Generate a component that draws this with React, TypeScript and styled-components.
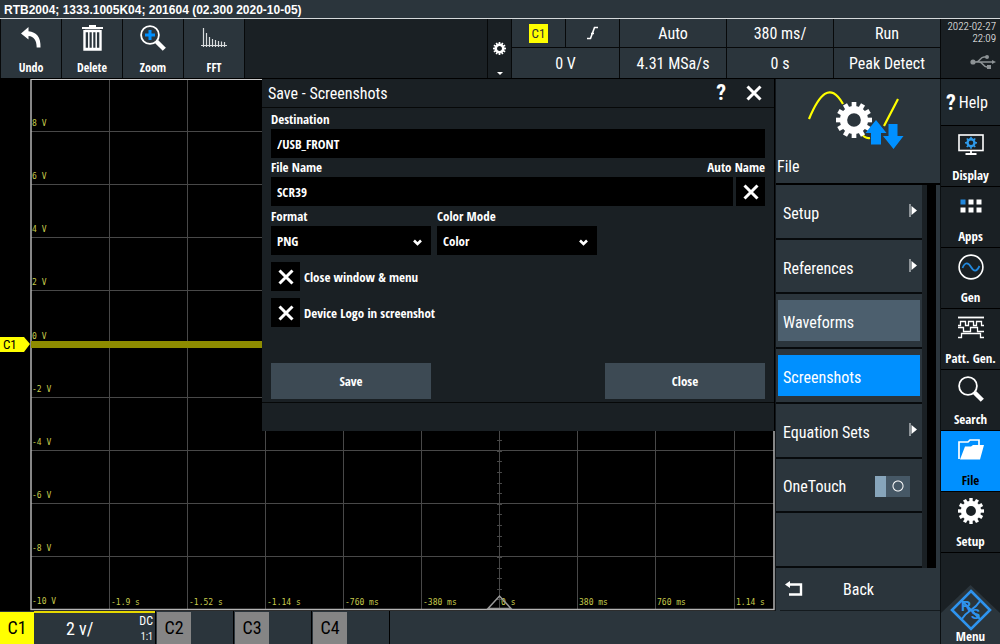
import React from "react";
import styled, { createGlobalStyle } from "styled-components";

const narrow = `"Roboto Condensed", "Arial Narrow", sans-serif`;
const narrowBold = `"Open Sans Condensed", "Roboto Condensed", sans-serif`;
const c = {
  panel: "#2b353c",
  dark: "#1a2024",
  blue: "#0090ff",
  slate: "#3d4a54",
  steel: "#4c5f6e",
  yellow: "#ffff00",
};

const GlobalStyle = createGlobalStyle`
  * { box-sizing: border-box; }
  body { margin: 0; background: ${c.panel}; }
  button, input, select { font: inherit; color: inherit; border: 0; padding: 0; margin: 0; border-radius: 0; }
  button { background: none; cursor: pointer; }
`;

const Page = styled.div`
  display: flex;
  flex-direction: column;
  min-height: 100vh;
  background: ${c.panel};
  color: #fff;
  font-family: ${narrow};
  font-size: 14px;
`;
const TitleBar = styled.header`
  height: 19px;
  padding: 2px 4px 0;
  border-bottom: 1px solid #d5d9db;
  font: bold 12px/17px "Liberation Sans", sans-serif;
`;
const TopBar = styled.div`
  display: flex;
  height: 60px;
  padding-left: 1px;
  gap: 1px;
  background: #07090a;
  border-bottom: 1px solid #000;
`;
const Tool = styled.button`
  width: 60px;
  display: flex;
  flex-direction: column;
  align-items: center;
  justify-content: space-between;
  padding: 6px 0 2px;
  background: ${c.panel};
  font-family: ${narrowBold};
  font-weight: bold;
  font-size: 12px;
  line-height: 16px;
`;
const Filler = styled.div`
  flex: 1;
  background: ${c.dark};
`;
const Options = styled.button`
  width: 23px;
  display: flex;
  flex-direction: column;
  align-items: center;
  padding-top: 23px;
  gap: 17px;
  background: ${c.dark};
`;
const Readouts = styled.div`
  display: grid;
  grid-template-columns: 53px 53px repeat(3, 106px);
  grid-template-rows: 28px 1fr;
  gap: 1px;
`;
const Readout = styled.button<{ $span?: boolean }>`
  display: flex;
  align-items: center;
  justify-content: center;
  grid-column: ${(p) => (p.$span ? "span 2" : "auto")};
  background: ${c.panel};
  font-size: 16px;
`;
const Badge = styled.span`
  padding: 0 3px;
  background: ${c.yellow};
  color: #333;
  font-size: 13px;
  line-height: 19px;
`;
const Clock = styled.div`
  width: 59px;
  display: flex;
  flex-direction: column;
  align-items: flex-end;
  padding: 2px 4px 0 0;
  background: ${c.dark};
  color: #fff;
  font-family: "Roboto Condensed Light", ${narrow};
  font-size: 11px;
  line-height: 12px;
  white-space: nowrap;
  svg { margin-top: 9px; }
`;
const Body = styled.div`
  flex: 1;
  display: flex;
`;
const Work = styled.div`
  flex: 1;
  display: flex;
  flex-direction: column;
`;
const Upper = styled.main`
  flex: 1;
  display: flex;
`;
const Scope = styled.section`
  position: relative;
  flex: 1;
  background: #000;
  svg.plot { display: block; width: 100%; }
`;
const Dialog = styled.form`
  position: absolute;
  top: 0;
  right: 0;
  left: 262px;
  background: ${c.dark};
  border-right: 1px solid #000;
  font-family: ${narrowBold};
  font-weight: bold;
  font-size: 13px;
`;
const DialogHead = styled.div`
  display: flex;
  align-items: center;
  height: 29px;
  padding: 0 12px 0 6px;
  gap: 20px;
  border-bottom: 1px solid #060808;
  font-family: ${narrow};
  h2 { flex: 1; margin: 0; padding-top: 1px; font-size: 16px; font-weight: normal; }
  button { display: flex; font-size: 22px; line-height: 24px; }
`;
const DialogBody = styled.div`
  padding: 2px 9px 3px;
  border-bottom: 1px solid #060808;
`;
const LabelRow = styled.div`
  display: flex;
  justify-content: space-between;
  line-height: 19px;
`;
const FieldRow = styled.div`
  display: flex;
  gap: 3px;
`;
const TextBox = styled.input`
  flex: 1;
  width: 100%;
  height: 29px;
  padding: 0 6px;
  background: #000;
`;
const Choices = styled.div`
  display: flex;
  gap: 6px;
`;
const Choice = styled.label`
  display: grid;
  width: 160px;
  line-height: 20px;
  svg { grid-area: 2 / 1; place-self: center end; margin: 3px 9px 0 0; pointer-events: none; }
`;
const Select = styled.select`
  grid-area: 2 / 1;
  appearance: none;
  height: 29px;
  padding: 0 6px;
  background: #000;
`;
const CheckRow = styled.label`
  display: flex;
  align-items: center;
  gap: 4px;
  margin-top: 7px;
`;
const CheckCell = styled.span`
  display: grid;
  width: 29px;
  height: 29px;
  background: #000;
  svg { grid-area: 1 / 1; place-self: center; visibility: hidden; pointer-events: none; }
  input:checked + svg { visibility: visible; }
`;
const CheckInput = styled.input`
  grid-area: 1 / 1;
  appearance: none;
`;
const Actions = styled.div`
  display: flex;
  justify-content: space-between;
  margin-top: 36px;
`;
const Action = styled.button`
  width: 160px;
  height: 36px;
  background: ${c.slate};
`;
const DialogFoot = styled.div`
  height: 28px;
`;
const Panel = styled.aside`
  width: 165px;
  display: flex;
  flex-direction: column;
  border-left: 1px solid #11161a;
`;
const PanelHead = styled.div`
  display: flex;
  flex-direction: column;
  height: 106px;
  padding: 9px 1px 0;
  border-bottom: 2px solid #000;
  svg { align-self: center; margin-right: 6px; }
  h1 { margin: 6px 0 0; font-size: 16px; font-weight: normal; line-height: 22px; }
`;
const MenuList = styled.div`
  flex: 1;
  display: flex;
  flex-direction: column;
  margin-right: 4px;
  padding-right: 10px;
  background: linear-gradient(to left, #000 9px, ${c.dark} 9px);
`;
const Item = styled.div<{ $tone?: string }>`
  flex: 1;
  display: flex;
  margin-right: 4px;
  padding: 6px 2px;
  background: ${c.panel};
  border-bottom: 2px solid #070a0c;
  font-size: 16px;
  > * {
    flex: 1;
    display: flex;
    align-items: center;
    justify-content: space-between;
    padding: 4px 3px 0 5px;
    background: ${(p) => p.$tone ?? "transparent"};
  }
  svg { margin-top: -6px; }
`;
const Toggle = styled.input`
  appearance: none;
  width: 35px;
  height: 21px;
  margin-right: 7px;
  background: radial-gradient(circle at 23px 10px, transparent 4px, #fff 5px, transparent 6px),
    linear-gradient(to right, #87a5bb 11px, #465866 11px);
`;
const Back = styled.button`
  display: flex;
  align-items: center;
  height: 43px;
  padding-left: 5px;
  margin-left: 4px;
  border-bottom: 1px solid #141a1e;
  background: ${c.panel};
  font-size: 16px;
  span { flex: 1; padding-right: 26px; }
`;
const Channels = styled.footer`
  display: flex;
  gap: 1px;
  height: 33px;
  font-size: 18px;
`;
const Channel = styled.button<{ $on?: boolean }>`
  display: flex;
  align-items: center;
  width: ${(p) => (p.$on ? 156 : 77)}px;
  border-right: 1px solid #000;
  text-align: left;
  > b {
    width: 34px;
    line-height: 32px;
    font-weight: normal;
    text-align: center;
    align-self: flex-end;
    background: ${(p) => (p.$on ? c.yellow : "#858585")};
    color: #000;
  }
`;
const Scale = styled.span`
  flex: 1;
  align-self: stretch;
  display: flex;
  align-items: center;
  border-top: 2px solid #e6d800;
  padding-right: 2px;
  white-space: nowrap;
  > span:first-child { flex: 1; padding-left: 32px; }
`;
const Coupling = styled.span`
  display: flex;
  flex-direction: column;
  align-items: flex-end;
  font-size: 12px;
  line-height: 16px;
  small { font-size: 10px; }
`;
const Sidebar = styled.nav`
  width: 60px;
  display: flex;
  flex-direction: column;
  border-left: 1px solid #0b0f11;
  background: ${c.dark};
`;
const Help = styled.button`
  display: flex;
  align-items: center;
  gap: 3px;
  height: 47px;
  padding-left: 5px;
  border-bottom: 1px solid #000;
  background: #1f282e;
  font-size: 16px;
  b { font-size: 22px; }
`;
const SideItem = styled.button<{ $active?: boolean }>`
  display: flex;
  flex-direction: column;
  align-items: center;
  justify-content: space-between;
  height: 61px;
  padding: 6px 0 3px;
  border-bottom: 1px solid #000;
  background: ${(p) => (p.$active ? c.blue : "transparent")};
  color: ${(p) => (p.$active ? "#000" : "#fff")};
  font-family: ${narrowBold};
  font-weight: bold;
  font-size: 13px;
  line-height: 16px;
  white-space: nowrap;
`;
const MenuButton = styled.button`
  display: flex;
  flex-direction: column;
  align-items: center;
  margin-top: auto;
  padding-top: 4px;
  background: ${c.panel};
  clip-path: polygon(50% 0, 100% 28px, 100% 100%, 0 100%, 0 28px);
  font-family: ${narrowBold};
  font-weight: bold;
  font-size: 13px;
  line-height: 16px;
  svg { margin-bottom: -3px; }
`;

const Cross = ({ size = 16 }: { size?: number }) => (
  <svg width={size} height={size} viewBox="0 0 16 16" stroke="#fff" strokeWidth="3">
    <path d="M1.5 1.5 14.5 14.5M14.5 1.5 1.5 14.5" />
  </svg>
);

const Chevron = () => (
  <svg width="9" height="7" viewBox="0 0 9 7" fill="none" stroke="#fff" strokeWidth="2.6">
    <path d="M1 1.5 4.5 5 8 1.5" />
  </svg>
);

const Teeth = ({ cx, cy, r, count = 12, color = "#fff" }: { cx: number; cy: number; r: number; count?: number; color?: string }) => (
  <g transform={`translate(${cx} ${cy})`}>
    <circle r={r * 0.58} fill="none" stroke={color} strokeWidth={r * 0.4} />
    {Array.from({ length: count }, (_, i) => (
      <rect key={i} x={-r * 0.13} y={-r} width={r * 0.26} height={r * 0.35} fill={color} transform={`rotate(${(i * 360) / count})`} />
    ))}
  </g>
);

const Gear = ({ size }: { size: number }) => (
  <svg width={size} height={size} viewBox="0 0 26 26">
    <Teeth cx={13} cy={13} r={13} />
  </svg>
);

const UndoIcon = () => (
  <svg width="22" height="24" viewBox="0 0 22 24">
    <path d="M1 7.500 8.500 1v4.200c8 .8 12.500 6 12 16.300h-3.800C16.500 14 14 10.500 8.500 10v3.500z" fill="#fff" transform="translate(0 1)" />
  </svg>
);
const TrashIcon = () => (
  <svg width="21" height="26" viewBox="0 0 21 26" fill="none" stroke="#fff">
    <path d="M0 3h21M7 1.200h7" strokeWidth="2.200" />
    <path d="M2.500 5v19.500h16V5M3 6h15M3 24h15" strokeWidth="2.400" />
    <path d="M6.800 6v18M10.500 6v18M14.200 6v18" strokeWidth="1.500" />
  </svg>
);
const Lens = ({ plus = false }: { plus?: boolean }) => (
  <svg width="26" height="26" viewBox="0 0 26 26" fill="none" stroke="#fff">
    <circle cx="10" cy="10" r="8.900" strokeWidth="1.800" />
    <path d="m16.500 16.500 7.800 7.800" strokeWidth="4.400" />
    {plus && <path d="M10 5v10M5 10h10" stroke={c.blue} strokeWidth="3" />}
  </svg>
);
const FftIcon = () => (
  <svg width="26" height="26" viewBox="0 0 26 26" stroke="#d9dcdd" strokeWidth="1.200">
    <path d="M0 20.500h26M2.500 3v19M5.500 8v14M8.500 12v10M11.500 14v8M14.500 15v7M17.500 16v6M20.500 16.500v5.500M23.500 17v5" />
  </svg>
);
const UsbIcon = () => (
  <svg width="26" height="16" viewBox="0 0 26 16" fill="none" stroke="#8d9295" strokeWidth="1.500">
    <path d="M3 8h20M6 8c4 0 4-5 8-5h3M9 8c4 0 4 5 8 5h2" />
    <circle cx="3" cy="8" r="2.600" fill="#8d9295" stroke="none" />
    <circle cx="17" cy="3" r="2" fill="#8d9295" stroke="none" />
    <path d="M17 11h4v4h-4zM22 6l4 2-4 2z" fill="#8d9295" stroke="none" />
  </svg>
);
const DisplayIcon = () => (
  <svg width="26" height="26" viewBox="0 0 26 26" fill="none" stroke="#fff">
    <rect x="1" y="3" width="24" height="15.500" strokeWidth="1.600" />
    <path d="M13 19v3M7.500 22h11" strokeWidth="1.800" />
    <g stroke="none"><Teeth cx={13} cy={10.8} r={6} count={8} color="#2f9bea" /></g>
  </svg>
);
const AppsIcon = () => (
  <svg width="26" height="26" viewBox="0 0 26 26" fill="#fff">
    <path d="M2.500 6.500h5v5h-5z" fill="#2288dd" />
    <path d="M10.500 6.500h5v5h-5zM18.500 6.500h5v5h-5zM2.500 14.500h5v5h-5zM10.500 14.500h5v5h-5zM18.500 14.500h5v5h-5z" />
  </svg>
);
const GenIcon = () => (
  <svg width="26" height="26" viewBox="0 0 26 26" fill="none">
    <circle cx="13" cy="13" r="11.900" stroke="#fff" strokeWidth="1.600" />
    <path d="M4.500 14c2.500-6 5.500-6 8.500-1s5.500 5 8.500-1" stroke="#2288dd" strokeWidth="1.800" />
  </svg>
);
const PatternIcon = () => (
  <svg width="26" height="26" viewBox="0 0 26 26" fill="none" stroke="#fff" strokeWidth="1.300">
    <path d="M0 2.500h26" strokeWidth="1.800" />
    <path d="M0 10.500h2.500v-4h5v4h3v-4h5v4h3v-4h5v4H26M0 12.500h5.500v4h7v-4h7v4H26M0 22.500h3.500v-4h19v4H26" />
  </svg>
);
const FolderIcon = () => (
  <svg width="26" height="26" viewBox="0 0 26 26">
    <path d="M1 22V5h9l2-2h9v5" fill="none" stroke="#fff" strokeWidth="1.700" />
    <path d="M7 9.500h6l2-1.500h11l-4 14.500H2z" fill="#fff" />
  </svg>
);
const EdgeIcon = () => (
  <svg width="12" height="14" viewBox="0 0 12 14" fill="none" stroke="#fff" strokeWidth="1.600">
    <path d="M0 12.500h3.500L7.500 1.500H11M4 7.500h3" />
  </svg>
);
const BackIcon = () => (
  <svg width="18" height="16" viewBox="0 0 18 16">
    <path d="M4 3.500h12v10H4" fill="none" stroke="#fff" strokeWidth="2.400" />
    <path d="M0 3.500 5 0v7z" fill="#fff" />
  </svg>
);
const Submenu = () => (
  <svg width="8" height="13" viewBox="0 0 8 13">
    <path d="M1 0v13" stroke="#cfd3d5" strokeWidth="1.200" />
    <path d="M2.500 2 8 6.500 2.500 11z" fill="#fff" />
  </svg>
);
const FileArt = () => (
  <svg width="98" height="62" viewBox="806 87 98 62">
    <path d="M809 118C819 94 830 80 843 103M861 132q4 6 9 5M884 125l14-27" fill="none" stroke={c.yellow} strokeWidth="2.200" />
    <Teeth cx={854} cy={119} r={18} />
    <path d="m876 119 10.500 13H881v11.500h-10V132h-5.500zM893.500 148l-10.500-13h5.500v-12h9v12h6z" fill={c.blue} />
  </svg>
);
const Logo = () => (
  <svg width="42" height="42" viewBox="0 0 42 42" fill="none" stroke="#2e93ee">
    <path d="M21 2 40 21 21 40 2 21z" strokeWidth="2.600" />
    <path d="M11.500 11.500 21 21M21 21l9.500 9.500M30.500 11.500q-4 6-9.500 9.500T11.500 30.500" strokeWidth="2" />
    <g fill="#2e93ee" stroke="none" fontFamily="Liberation Sans, sans-serif" fontWeight="bold" fontSize="14">
      <text x="11" y="22">R</text>
      <text x="21" y="30">S</text>
    </g>
  </svg>
);

const columns = [109, 187, 265, 343, 421, 499, 577, 655, 734];
const timeMarks = ["-1.9 s", "-1.52 s", "-1.14 s", "-760 ms", "-380 ms", "0 s", "380 ms", "760 ms", "1.14 s"];
const volts = ["8 V", "6 V", "4 V", "2 V", "0 V", "-2 V", "-4 V", "-6 V", "-8 V", "-10 V"];
const rowY = (i: number) => Math.round(53.1 * (i + 1));

const Plot = () => (
  <svg className="plot" viewBox="0 0 775 532" role="img" aria-label="Channel 1 waveform">
    <g stroke="#484848" strokeWidth="1">
      {columns.map((x) => <path key={x} d={`M${x + 0.5} 0V531`} />)}
      {volts.slice(0, 9).map((v, i) => <path key={v} d={`M31 ${rowY(i) - 0.5}H774`} />)}
      {Array.from({ length: 50 }, (_, i) => <path key={i} d={`M497 ${Math.round(i * 10.62) + 0.5}h5`} />)}
    </g>
    <path d="M31 0V530.500H774V0" fill="none" stroke="#b4b4b4" strokeWidth="1.500" />
    <path d="M31 0.500H774" stroke="#c9c9c9" />
    <path d="M31 262H774V269H31z" fill="#8e8c00" />
    <path d="M0 258H24L30 265 24 273H0z" fill={c.yellow} />
    <text x="3" y="270" fill="#000" fontSize="13">C1</text>
    <g fill="#c6ca4c" fontFamily="DejaVu Sans Mono, monospace" fontSize="8">
      {volts.map((v, i) => <text key={v} x="32" y={rowY(i) - 6}>{v}</text>)}
      {timeMarks.map((t, i) => <text key={t} x={columns[i] + 2} y="526">{t}</text>)}
    </g>
    <path d="M488 529.500 499.500 517 511 529.500z" fill="none" stroke="#9a9a9a" strokeWidth="1.500" />
  </svg>
);

const Check = ({ label }: { label: string }) => (
  <CheckRow>
    <CheckCell>
      <CheckInput type="checkbox" defaultChecked />
      <Cross />
    </CheckCell>
    {label}
  </CheckRow>
);

const tools = [
  { name: "Undo", icon: <UndoIcon /> },
  { name: "Delete", icon: <TrashIcon /> },
  { name: "Zoom", icon: <Lens plus /> },
  { name: "FFT", icon: <FftIcon /> },
];
const sideItems = [
  { name: "Display", icon: <DisplayIcon /> },
  { name: "Apps", icon: <AppsIcon /> },
  { name: "Gen", icon: <GenIcon /> },
  { name: "Patt. Gen.", icon: <PatternIcon /> },
  { name: "Search", icon: <Lens /> },
  { name: "File", icon: <FolderIcon />, active: true },
  { name: "Setup", icon: <Gear size={26} /> },
];
const menuItems = [
  { name: "Setup", sub: true },
  { name: "References", sub: true },
  { name: "Waveforms", tone: c.steel },
  { name: "Screenshots", tone: c.blue },
  { name: "Equation Sets", sub: true },
];

export default function App() {
  return (
    <Page>
      <GlobalStyle />
      <TitleBar>RTB2004; 1333.1005K04; 201604 (02.300 2020-10-05)</TitleBar>
      <TopBar>
        {tools.map((t) => (
          <Tool key={t.name}>{t.icon}{t.name}</Tool>
        ))}
        <Filler />
        <Options aria-label="Toolbar options">
          <Gear size={13} />
          <svg width="6" height="3" viewBox="0 0 6 3"><path d="M0 0h6L3 3z" fill="#fff" /></svg>
        </Options>
        <Readouts>
          <Readout><Badge>C1</Badge></Readout>
          <Readout aria-label="Rising edge"><EdgeIcon /></Readout>
          <Readout>Auto</Readout>
          <Readout>380 ms/</Readout>
          <Readout>Run</Readout>
          <Readout $span>0 V</Readout>
          <Readout>4.31 MSa/s</Readout>
          <Readout>0 s</Readout>
          <Readout>Peak Detect</Readout>
        </Readouts>
        <Clock>
          <span>2022-02-27</span>
          <span>22:09</span>
          <UsbIcon />
        </Clock>
      </TopBar>
      <Body>
        <Work>
          <Upper>
            <Scope>
              <Plot />
              <Dialog onSubmit={(e) => e.preventDefault()} aria-label="Save - Screenshots">
                <DialogHead>
                  <h2>Save - Screenshots</h2>
                  <button type="button">?</button>
                  <button type="button" aria-label="Close dialog"><Cross /></button>
                </DialogHead>
                <DialogBody>
                  <LabelRow><label htmlFor="destination">Destination</label></LabelRow>
                  <FieldRow><TextBox id="destination" defaultValue="/USB_FRONT" /></FieldRow>
                  <LabelRow>
                    <label htmlFor="filename">File Name</label>
                    <label htmlFor="autoname">Auto Name</label>
                  </LabelRow>
                  <FieldRow>
                    <TextBox id="filename" defaultValue="SCR39" />
                    <CheckCell>
                      <CheckInput id="autoname" type="checkbox" defaultChecked />
                      <Cross />
                    </CheckCell>
                  </FieldRow>
                  <Choices>
                    <Choice>Format<Select><option>PNG</option></Select><Chevron /></Choice>
                    <Choice>Color Mode<Select><option>Color</option></Select><Chevron /></Choice>
                  </Choices>
                  <Check label="Close window & menu" />
                  <Check label="Device Logo in screenshot" />
                  <Actions>
                    <Action type="submit">Save</Action>
                    <Action type="button">Close</Action>
                  </Actions>
                </DialogBody>
                <DialogFoot />
              </Dialog>
            </Scope>
            <Panel>
              <PanelHead>
                <FileArt />
                <h1>File</h1>
              </PanelHead>
              <MenuList>
                {menuItems.map((m) => (
                  <Item key={m.name} $tone={m.tone}>
                    <button>{m.name}{m.sub && <Submenu />}</button>
                  </Item>
                ))}
                <Item>
                  <label>OneTouch<Toggle type="checkbox" role="switch" /></label>
                </Item>
                <Item />
              </MenuList>
              <Back><BackIcon /><span>Back</span></Back>
            </Panel>
          </Upper>
          <Channels>
            <Channel $on>
              <b>C1</b>
              <Scale>
                <span>2 v/</span>
                <Coupling><span>DC</span><small>1:1</small></Coupling>
              </Scale>
            </Channel>
            <Channel><b>C2</b></Channel>
            <Channel><b>C3</b></Channel>
            <Channel><b>C4</b></Channel>
          </Channels>
        </Work>
        <Sidebar>
          <Help><b>?</b>Help</Help>
          {sideItems.map((s) => (
            <SideItem key={s.name} $active={s.active}>{s.icon}{s.name}</SideItem>
          ))}
          <MenuButton><Logo />Menu</MenuButton>
        </Sidebar>
      </Body>
    </Page>
  );
}
